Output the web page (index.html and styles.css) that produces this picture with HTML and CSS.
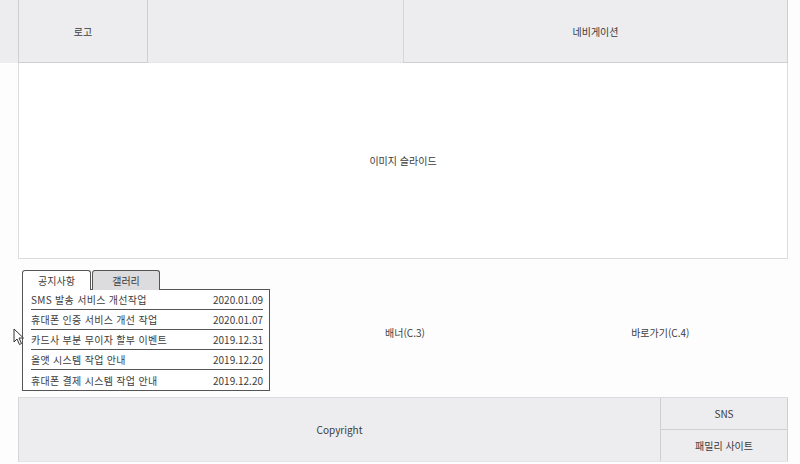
FILE: index.html
```html
<!DOCTYPE html>
<html lang="ko">
<head>
  <meta charset="utf-8">
  <title>레이아웃</title>
  <link rel="stylesheet" href="styles.css">
</head>
<body>
  <div id="wrap">
    <header class="header">
      <div class="logo">로고</div>
      <div class="header-gap"></div>
      <nav class="nav">네비게이션</nav>
    </header>

    <section class="slider">이미지 슬라이드</section>

    <section class="contents">
      <div class="col notice-col">
        <div class="tabs">
          <div class="tab-btns">
            <span class="tab-btn active">공지사항</span>
            <span class="tab-btn">갤러리</span>
          </div>
          <ul class="tab-panel">
            <li><span class="title">SMS 발송 서비스 개선작업</span><span class="date">2020.01.09</span></li>
            <li><span class="title">휴대폰 인증 서비스 개선 작업</span><span class="date">2020.01.07</span></li>
            <li><span class="title">카드사 부분 무이자 할부 이벤트</span><span class="date">2019.12.31</span></li>
            <li><span class="title">올앳 시스템 작업 안내</span><span class="date">2019.12.20</span></li>
            <li><span class="title">휴대폰 결제 시스템 작업 안내</span><span class="date">2019.12.20</span></li>
          </ul>
        </div>
      </div>
      <div class="col banner">배너(C.3)</div>
      <div class="col link">바로가기(C.4)</div>
    </section>

    <footer class="footer">
      <div class="copy">Copyright</div>
      <div class="footer-side">
        <div class="sns">SNS</div>
        <div class="family">패밀리 사이트</div>
      </div>
    </footer>
  </div>

  <svg class="cursor" width="12" height="18" viewBox="0 0 12 18">
    <path d="M1 1 L1 14 L4 11 L6.5 16.5 L8.5 15.5 L6 10 L10.5 10 Z" fill="#fff" stroke="#333" stroke-width="1"/>
  </svg>
</body>
</html>
```

FILE: styles.css
```css
* { box-sizing:border-box }
body {
  margin:0;
  font-family:"Noto Sans CJK KR", "Noto Sans", sans-serif;
  font-size:10px;
  color:#3c3c3c;
  background:#fefdfe
}
ul { margin:0; padding:0; list-style:none }

#wrap { width:788px }

.header {
  display:flex;
  height:63px;
  padding-left:18px;
  background:#edecee
}
.logo, .nav {
  display:flex; align-items:center; justify-content:center;
  border:1px solid #cfcfd1;
  border-top:0
}
.logo { width:130px }
.header-gap { width:255px; border-bottom:1px dotted #dcdcde }
.nav { flex:1; border-left-color:#d6d6d8 }

.slider {
  height:196px;
  margin-left:18px;
  display:flex; align-items:center; justify-content:center;
  border:1px solid #dcdcde;
  border-top:0;
  background:#fff
}

.contents {
  display:flex;
  height:127px;
  margin:10px 0 0 18px
}
.col { flex:1; display:flex; align-items:center; justify-content:center }
.notice-col { display:block; padding:1px 0 0 4px }

.tabs { width:248px }
.tab-btns { display:flex; height:20px; position:relative; z-index:1 }
.tab-btn {
  width:69px;
  display:flex; align-items:center; justify-content:center;
  border:1px solid #555;
  border-bottom:0;
  border-radius:3px 3px 0 0;
  background:#fff;
  margin-right:1px
}
.tab-btn + .tab-btn { width:68px; background:#dcdbdd }
.tab-panel {
  height:102px;
  margin-top:-1px;
  padding:0 6px 0 8px;
  border:1px solid #555;
  background:#fff
}
.tab-panel li {
  display:flex; justify-content:space-between; align-items:center;
  height:20px;
  border-bottom:1px solid #555
}
.tab-panel li:last-child { border-bottom:0 }
.title { letter-spacing:0.3px }

.footer {
  display:flex;
  height:65px;
  margin:1px 0 0 18px;
  background:#edecee;
  border-top:1px solid #dcdcde;
  border-left:1px solid #d6d6d8;
  border-bottom:1px solid #e4e4e6
}
.copy { flex:1; display:flex; align-items:center; justify-content:center }
.footer-side { width:128px; display:flex; flex-direction:column; border-left:1px solid #cfcfd1; border-right:1px solid #cfcfd1 }
.sns, .family { flex:1; display:flex; align-items:center; justify-content:center }
.sns { border-bottom:1px solid #cfcfd1 }

.cursor { position:absolute; left:13px; top:328px }
```
